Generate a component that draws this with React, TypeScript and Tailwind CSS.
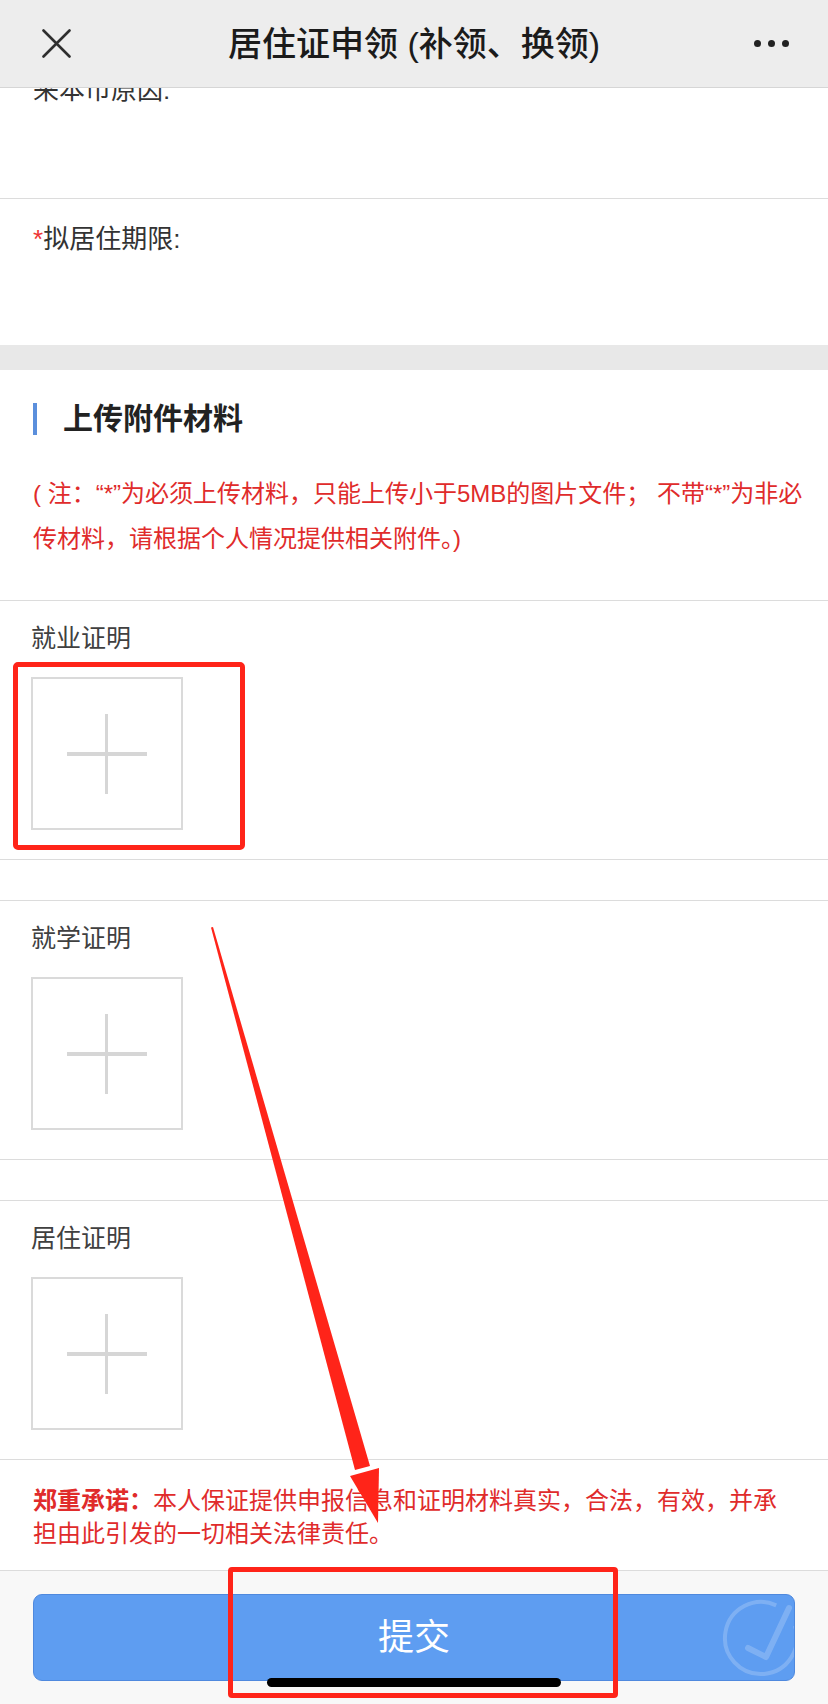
import React from "react";

const uploads = ["就业证明", "就学证明", "居住证明"];

function UploadBlock({ label }: { label: string }) {
  return (
    <div className="border-b border-[#dcdcdc] px-[31px] pt-[20px] pb-[29px]">
      <p className="text-[25px] leading-[34px] text-[#404040]">{label}</p>
      <div className="mt-[22px] flex h-[153px] w-[152px] items-center justify-center border-2 border-[#dadada]">
        <div className="relative h-[80px] w-[80px]">
          <div className="absolute left-0 top-[38px] h-[4px] w-[80px] bg-[#d6d6d6]" />
          <div className="absolute left-[38px] top-0 h-[80px] w-[3px] bg-[#d6d6d6]" />
        </div>
      </div>
    </div>
  );
}

export default function App() {
  return (
    <div className="relative h-[1704px] w-[828px] overflow-hidden bg-white font-['Liberation_Sans','Noto_Sans_CJK_SC',sans-serif]">
      {/* nav bar */}
      <div className="relative z-10 grid h-[88px] grid-cols-[1fr_auto_1fr] items-center border-b border-[#d6d6d6] bg-[#ededed]">
        <div className="pl-[42px]">
          <svg width="29" height="29" viewBox="0 0 29 29">
            <path d="M1.5 1.5 L27.5 27.5 M27.5 1.5 L1.5 27.5" stroke="#2e2e2e" strokeWidth="2.6" strokeLinecap="round" />
          </svg>
        </div>
        <h1 className="text-[34px] font-medium leading-[40px] text-[#1b1b1b]">居住证申领 (补领、换领)</h1>
        <div className="flex justify-end gap-[7px] pr-[39px]">
          <span className="h-[7px] w-[7px] rounded-full bg-[#222]" />
          <span className="h-[7px] w-[7px] rounded-full bg-[#222]" />
          <span className="h-[7px] w-[7px] rounded-full bg-[#222]" />
        </div>
      </div>

      <div className="overflow-hidden">
        <div className="-mt-[38px] h-[149px] border-b border-[#dcdcdc] px-[33px] pt-[22px]">
          <p className="text-[26px] leading-[36px] text-[#333]">来本市原因:</p>
        </div>
        <div className="h-[146px] px-[33px] pt-[22px]">
          <p className="text-[26px] leading-[36px] text-[#333]">
            <span className="text-[#e33]">*</span>拟居住期限:
          </p>
        </div>
        <div className="h-[25px] bg-[#e8e8e8]" />

        {/* attachments */}
        <div className="border-b border-[#dcdcdc] px-[33px] pt-[33px] pb-[39px]">
          <div className="flex h-[32px] items-center gap-[26px]">
            <span className="h-[32px] w-[4px] bg-[#5b8fdc]" />
            <h2 className="text-[30px] font-bold leading-[32px] text-[#222]">上传附件材料</h2>
          </div>
          <p className="mt-[36px] whitespace-nowrap text-[24px] leading-[45px] text-[#e02b2b]">
            ( 注：“*”为必须上传材料，只能上传小于5MB的图片文件； 不带“*”为非必
            <br />
            传材料，请根据个人情况提供相关附件。)
          </p>
        </div>

        <UploadBlock label={uploads[0]} />
        <div className="h-[41px] border-b border-[#dcdcdc]" />
        <UploadBlock label={uploads[1]} />
        <div className="h-[41px] border-b border-[#dcdcdc]" />
        <UploadBlock label={uploads[2]} />

        <div className="h-[111px] border-b border-[#dcdcdc] px-[33px] pt-[24px]">
          <p className="whitespace-nowrap text-[24px] leading-[33px] text-[#e02b2b]">
            <span className="font-bold">郑重承诺：</span>本人保证提供申报信息和证明材料真实，合法，有效，并承
            <br />
            担由此引发的一切相关法律责任。
          </p>
        </div>

        <div className="h-[133px] bg-[#f8f8f8] px-[33px] pt-[23px]">
          <button className="relative flex h-[87px] w-full items-center justify-center overflow-hidden rounded-[9px] border border-[#4f89de] bg-[#5e9df1] text-[36px] text-white">
            提交
            <svg className="absolute left-[680px] top-0" width="82" height="87" viewBox="0 0 82 87" fill="none">
              <path d="M62.2 10.4 A36 36 0 1 0 80.8 30.7" stroke="rgba(255,255,255,0.2)" strokeWidth="4" />
              <path d="M34 53 L52 62 L75 13" stroke="rgba(255,255,255,0.2)" strokeWidth="6" strokeLinecap="round" strokeLinejoin="round" />
            </svg>
          </button>
        </div>
      </div>

      {/* markup overlays */}
      <div className="pointer-events-none absolute left-[13px] top-[662px] h-[188px] w-[232px] rounded-[5px] border-[5px] border-[#ff2419]" />
      <div className="pointer-events-none absolute left-[228px] top-[1567px] h-[131px] w-[390px] rounded-[4px] border-[5px] border-[#ff2419]" />
      <svg className="pointer-events-none absolute left-0 top-0" width="828" height="1704" viewBox="0 0 828 1704">
        <polygon points="213,927 211,927.5 355,1470 370,1466" fill="#ff2419" />
        <polygon points="350,1476 379,1468 378,1523" fill="#ff2419" />
      </svg>
      <div className="absolute left-[267px] top-[1678px] h-[9px] w-[294px] rounded-full bg-black" />
    </div>
  );
}
